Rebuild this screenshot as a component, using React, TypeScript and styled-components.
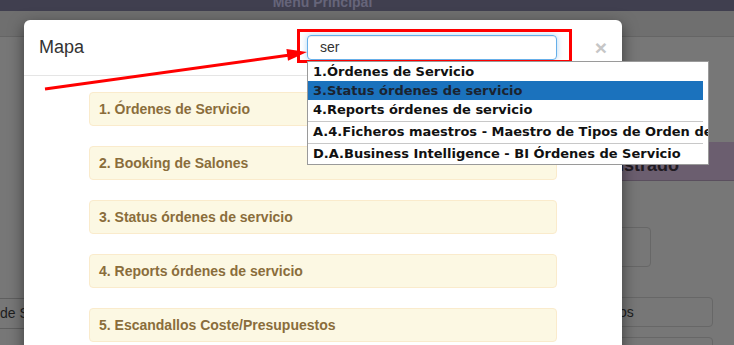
import React from "react";
import styled, { createGlobalStyle } from "styled-components";

const GlobalStyle = createGlobalStyle`
  html, body { margin: 0; padding: 0; }
  body {
    width: 734px;
    height: 345px;
    overflow: hidden;
    background: #777777;
    font-family: "Liberation Sans", Arial, sans-serif;
  }
`;

const Page = styled.div`
  position: relative;
  width: 734px;
  height: 345px;
  overflow: hidden;
  background: #777777;
`;

const TopNav = styled.div`
  height: 11px;
  background: #403f4f;
  display: flex;
  justify-content: center;
  overflow: hidden;
`;

const NavTitle = styled.div`
  margin-top: -6px;
  margin-left: -89px;
  font-size: 14px;
  font-weight: bold;
  line-height: 16px;
  color: #66657a;
`;

const SubNav = styled.div`
  height: 25px;
  background: #6f6f6f;
  border-bottom: 1px solid #656565;
`;

const Main = styled.div`
  display: grid;
  grid-template-columns: 1fr 134px;
`;

const LeftCol = styled.div`
  padding-top: 261px;
`;

const LeftField = styled.div`
  height: 29px;
  border-top: 1px solid #5f5f5f;
  border-bottom: 1px solid #5f5f5f;
  font-size: 14px;
  line-height: 29px;
  color: #1e1e1e;
  white-space: nowrap;
`;

const RightCol = styled.div`
  padding-top: 105px;
`;

const PurpleHeader = styled.div`
  height: 38px;
  background: #6b5e6f;
  border-bottom: 1px solid #5a4f5e;
  text-indent: -15px;
  font-size: 18px;
  font-weight: bold;
  line-height: 46px;
  color: #1f1a22;
  white-space: nowrap;
`;

const RightBody = styled.div`
  display: flex;
  flex-direction: column;
  gap: 10px;
  padding: 46px 21px 0 0;
`;

const GrayBox = styled.div<{ $w: number; $h: number; $mb?: number }>`
  width: ${(p) => p.$w}px;
  height: ${(p) => p.$h}px;
  box-sizing: border-box;
  border: 1px solid #676767;
  border-radius: 4px;
  margin-bottom: ${(p) => p.$mb ?? 0}px;
  font-size: 14px;
  line-height: 28px;
  padding-left: 14px;
  color: #1e1e1e;
`;

const Modal = styled.div`
  position: absolute;
  left: 24px;
  top: 20px;
  width: 598px;
  height: 360px;
  background: #ffffff;
  border-radius: 6px;
  box-shadow: 0 5px 15px rgba(0, 0, 0, 0.5);
`;

const ModalHeader = styled.div`
  display: flex;
  align-items: center;
  padding: 15px;
  border-bottom: 1px solid #e5e5e5;
`;

const Title = styled.div`
  width: 268px;
  font-size: 18px;
  line-height: 25px;
  color: #333333;
`;

const SearchInput = styled.div`
  width: 250px;
  height: 25px;
  box-sizing: border-box;
  border: 1px solid #66afe9;
  border-radius: 4px;
  box-shadow: inset 0 1px 1px rgba(0, 0, 0, 0.075), 0 0 6px rgba(102, 175, 233, 0.5);
  padding-left: 12px;
  font-size: 14px;
  line-height: 23px;
  color: #333333;
`;

const Spacer = styled.div`
  flex: 1;
`;

const Close = styled.div`
  font-size: 21px;
  font-weight: bold;
  line-height: 25px;
  color: #c6c6c6;
`;

const ModalBody = styled.div`
  display: flex;
  flex-direction: column;
  align-items: center;
  gap: 20px;
  padding-top: 16px;
`;

const Panel = styled.div`
  width: 468px;
  height: 34px;
  box-sizing: border-box;
  background: #fcf8e3;
  border: 1px solid #faebcc;
  border-radius: 4px;
  padding: 0 9px;
  font-size: 14px;
  font-weight: bold;
  line-height: 32px;
  color: #8a6d3b;
`;

const Highlight = styled.div`
  position: absolute;
  left: 297px;
  top: 29px;
  width: 275px;
  height: 34px;
  box-sizing: border-box;
  border: 3px solid #ff0000;
`;

const Arrow = styled.svg`
  position: absolute;
  left: 0;
  top: 0;
  pointer-events: none;
`;

const Dropdown = styled.div`
  position: absolute;
  left: 307px;
  top: 61px;
  width: 402px;
  box-sizing: border-box;
  background: #ffffff;
  border: 1px solid #9a9a9a;
  padding: 0 5px 1px 0;
  overflow: hidden;
`;

const Option = styled.div<{ $active?: boolean }>`
  height: 19px;
  padding-left: 5px;
  font-family: "DejaVu Sans", Verdana, sans-serif;
  font-size: 13px;
  font-weight: bold;
  line-height: 19px;
  white-space: nowrap;
  color: ${(p) => (p.$active ? "#1b2330" : "#111111")};
  background: ${(p) => (p.$active ? "#1b72bd" : "transparent")};
`;

const Separator = styled.div`
  height: 1px;
  background: #c8c8c8;
  margin: 2px 0 0;
`;

const panels = [
  "1. Órdenes de Servicio",
  "2. Booking de Salones",
  "3. Status órdenes de servicio",
  "4. Reports órdenes de servicio",
  "5. Escandallos Coste/Presupuestos",
];

export default function App() {
  return (
    <Page>
      <GlobalStyle />
      <TopNav>
        <NavTitle>Menu Principal</NavTitle>
      </TopNav>
      <SubNav />
      <Main>
        <LeftCol>
          <LeftField>de Servicio</LeftField>
        </LeftCol>
        <RightCol>
          <PurpleHeader>Registrado</PurpleHeader>
          <RightBody>
            <GrayBox $w={51} $h={40} $mb={20} />
            <GrayBox $w={113} $h={30}>
              tos
            </GrayBox>
            <GrayBox $w={113} $h={30} />
          </RightBody>
        </RightCol>
      </Main>

      <Modal>
        <ModalHeader>
          <Title>Mapa</Title>
          <SearchInput>ser</SearchInput>
          <Spacer />
          <Close>×</Close>
        </ModalHeader>
        <ModalBody>
          {panels.map((p) => (
            <Panel key={p}>{p}</Panel>
          ))}
        </ModalBody>
      </Modal>

      <Highlight />
      <Arrow width="734" height="345" viewBox="0 0 734 345">
        <line x1="45" y1="89" x2="290" y2="55" stroke="#ff0000" strokeWidth="3" />
        <polygon points="307,52 288,60.7 286.4,48.9" fill="#ff0000" />
      </Arrow>

      <Dropdown>
        <Option>1.Órdenes de Servicio</Option>
        <Option $active>3.Status órdenes de servicio</Option>
        <Option>4.Reports órdenes de servicio</Option>
        <Separator />
        <Option>A.4.Ficheros maestros - Maestro de Tipos de Orden de Servicio</Option>
        <Separator />
        <Option>D.A.Business Intelligence - BI Órdenes de Servicio</Option>
      </Dropdown>
    </Page>
  );
}
